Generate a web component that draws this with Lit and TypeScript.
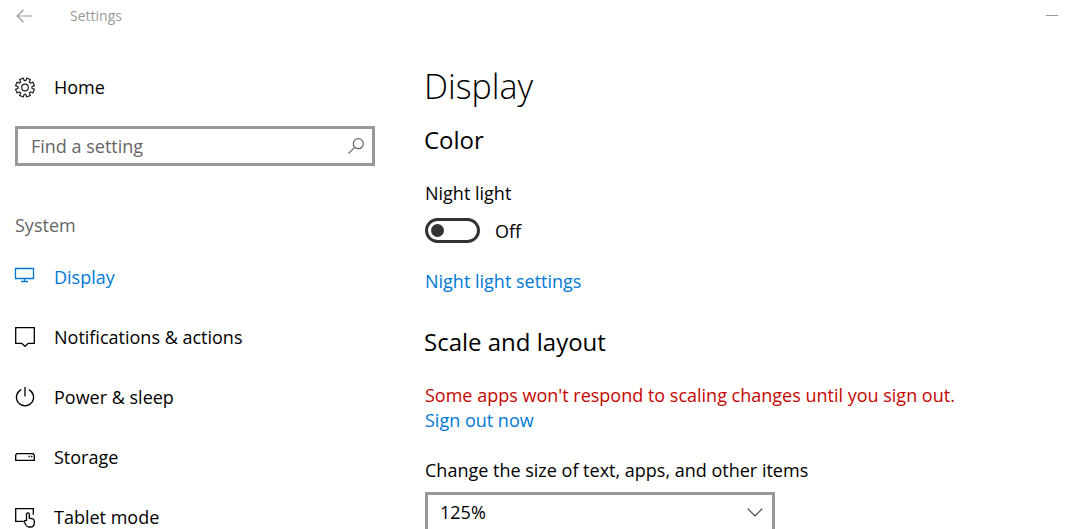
import { LitElement, html, css, svg } from "lit";
import { customElement, state } from "lit/decorators.js";

const icons = {
  display: svg`<path d="M.5 1.5h18v10h-18zM9.5 11.5v3M6 14.5h7" />`,
  notifications: svg`<path d="M.7 .7h18.6v15.6h-6l-3.3 3-3.3-3h-6z" />`,
  power: svg`<path d="M6.2 2.6a8.6 8.6 0 1 0 7.6 0M10 0v9.5" />`,
  storage: svg`<path d="M1.8 6.7h16.4l1.1 1.3v5.3H.7V8z" /><path d="M13.5 9.5h1.4M16 9.5h1.4" />`,
  tablet: svg`<path d="M8.5 14.3H.7V1.7h17.6v6" /><path d="M11.5 14V7.2a1.4 1.4 0 0 1 2.8 0v4l3.4.7q1.6.4 1.6 2v2q0 4.1-4 4.1h-1.4q-1.6 0-2.6-1.5l-2-3.2q-.5-1.4.7-1.6h1.5" />`,
};

const navItems = [
  { icon: icons.display, label: "Display" },
  { icon: icons.notifications, label: "Notifications & actions" },
  { icon: icons.power, label: "Power & sleep" },
  { icon: icons.storage, label: "Storage" },
  { icon: icons.tablet, label: "Tablet mode" },
];

function gearPath() {
  const pts: string[] = [];
  const teeth = 8;
  const step = (Math.PI * 2) / teeth;
  for (let i = 0; i < teeth; i++) {
    const a = (i + 0.5) * step;
    const corners: [number, number][] = [[-0.27, 7], [-0.21, 9.6], [0.21, 9.6], [0.27, 7]];
    for (const [o, r] of corners) {
      pts.push(`${(10 + r * Math.cos(a + o)).toFixed(2)} ${(10 + r * Math.sin(a + o)).toFixed(2)}`);
    }
  }
  return `M${pts.join("L")}Z`;
}

@customElement("app-root")
export class AppRoot extends LitElement {
  @state() private active = "Display";
  @state() private nightLight = false;

  static styles = css`
    :host {
      display: flex;
      flex-direction: column;
      height: 100vh;
      overflow: hidden;
      background: #fff;
      color: #000;
      font: 18px/24px "Open Sans", "Segoe UI", sans-serif;
    }
    * { box-sizing: border-box; }
    button, input, select { font: inherit; color: inherit; margin: 0; }
    a { color: #0078d7; text-decoration: none; }
    svg { display: block; fill: none; stroke: currentColor; }
    .titlebar {
      display: flex;
      align-items: center;
      height: 32px;
      padding: 0 26px 0 16px;
      color: #999;
      font-size: 14px;
      flex: none;
    }
    .plain { display: block; padding: 0; border: 0; background: none; }
    .caption { flex: 1; padding-left: 38px; line-height: 22px; }
    .body { display: grid; grid-template-columns: 375px minmax(0, 1fr); gap: 49px; }
    .sidebar { padding: 25px 0 0 15px; }
    .item { display: flex; align-items: center; gap: 19px; height: 60px; color: #000; }
    .item.active { color: #0078d7; }
    .icon { width: 20px; height: 21px; stroke-width: 1.3; flex: none; overflow: visible; }
    .gear { stroke-width: 1.2; color: #222; }
    .search {
      display: flex;
      align-items: center;
      height: 40px;
      margin-top: 9px;
      padding: 0 8px 0 13px;
      border: 3px solid #999;
      color: #666;
    }
    .field { flex: 1; min-width: 0; border: 0; padding: 0; outline: 0; background: none; }
    .field::placeholder { color: #666; opacity: 1; }
    .group { margin: 0; padding: 43px 0 6px; font-size: 18px; font-weight: 400; color: #666; }
    .main { padding-top: 30px; }
    .section { padding-left: 1px; }
    h1 { margin: 0; font-size: 34px; line-height: 48px; font-weight: 300; }
    h2 { margin: 0; font-size: 24px; line-height: 32px; font-weight: 400; }
    .color { margin-top: 14px; }
    .block { margin-top: 26px; }
    .toggle { display: flex; align-items: center; gap: 15px; margin-top: 12px; height: 25px; }
    .switch {
      appearance: none;
      display: flex;
      align-items: center;
      width: 55px;
      height: 25px;
      margin: 0;
      padding: 0 3px;
      border: 3px solid #333;
      border-radius: 13px;
    }
    .switch::before { content: ""; width: 13px; height: 13px; border-radius: 50%; background: #333; }
    .switch:checked { justify-content: flex-end; background: #0078d7; }
    .scale { margin-top: 33px; }
    .warning { margin: 25px 0 0; line-height: 25px; color: #c50500; }
    .label { display: block; margin-top: 25px; line-height: 25px; }
    .select {
      display: grid;
      grid-template-columns: minmax(0, 1fr) auto;
      align-items: center;
      max-width: 350px;
      margin-top: 9px;
    }
    .select select {
      grid-area: 1 / 1 / 2 / 3;
      appearance: none;
      height: 40px;
      padding: 0 40px 0 12px;
      border: 3px solid #999;
      border-radius: 0;
      background: none;
      outline: 0;
    }
    .select svg { grid-area: 1 / 2; margin-right: 12px; color: #444; pointer-events: none; }
  `;

  render() {
    return html`
      <header class="titlebar">
        <button class="plain" aria-label="Back">
          <svg width="16" height="14" viewBox="0 0 16 14" stroke-width="1.2"><path d="M7.5.8 1 7l6.5 6.2M1 7h15" /></svg>
        </button>
        <span class="caption">Settings</span>
        <button class="plain" aria-label="Minimize">
          <svg width="12" height="3" viewBox="0 0 12 3"><path d="M0 .5h12" /></svg>
        </button>
      </header>
      <div class="body">
        <nav class="sidebar">
          <a class="item" href="#home">
            <svg class="icon gear" viewBox="0 0 20 20"><path stroke-linejoin="round" d=${gearPath()} /><circle cx="10" cy="10" r="3.3" /></svg>
            Home
          </a>
          <div class="search">
            <input class="field" type="text" placeholder="Find a setting" aria-label="Find a setting" />
            <svg width="16" height="16" viewBox="0 0 16 16" stroke-width="1.2"><circle cx="10.3" cy="5.7" r="5" /><path d="M6.7 9.3.5 15.5" /></svg>
          </div>
          <h2 class="group">System</h2>
          ${navItems.map(
            (item) => html`<a
              class="item ${item.label === this.active ? "active" : ""}"
              href="#${item.label}"
              @click=${() => (this.active = item.label)}
              ><svg class="icon" viewBox="0 0 20 21">${item.icon}</svg>${item.label}</a>`
          )}
        </nav>
        <main class="main">
          <h1>Display</h1>
          <h2 class="color">Color</h2>
          <div class="section">
            <label class="label" for="night">Night light</label>
            <div class="toggle">
              <input
                class="switch"
                id="night"
                type="checkbox"
                role="switch"
                .checked=${this.nightLight}
                @change=${(e: Event) => (this.nightLight = (e.target as HTMLInputElement).checked)}
              />
              <span>${this.nightLight ? "On" : "Off"}</span>
            </div>
            <div class="block"><a href="#night-light">Night light settings</a></div>
          </div>
          <h2 class="scale">Scale and layout</h2>
          <div class="section">
            <p class="warning">
              Some apps won't respond to scaling changes until you sign out.<br />
              <a href="#sign-out">Sign out now</a>
            </p>
            <label class="label" for="size">Change the size of text, apps, and other items</label>
            <div class="select">
              <select id="size">
                <option>100%</option>
                <option selected>125%</option>
                <option>150%</option>
              </select>
              <svg width="16" height="9" viewBox="0 0 16 9" stroke-width="1.2"><path d="m.7.7 7.3 7.3L15.3.7" /></svg>
            </div>
          </div>
        </main>
      </div>
    `;
  }
}
